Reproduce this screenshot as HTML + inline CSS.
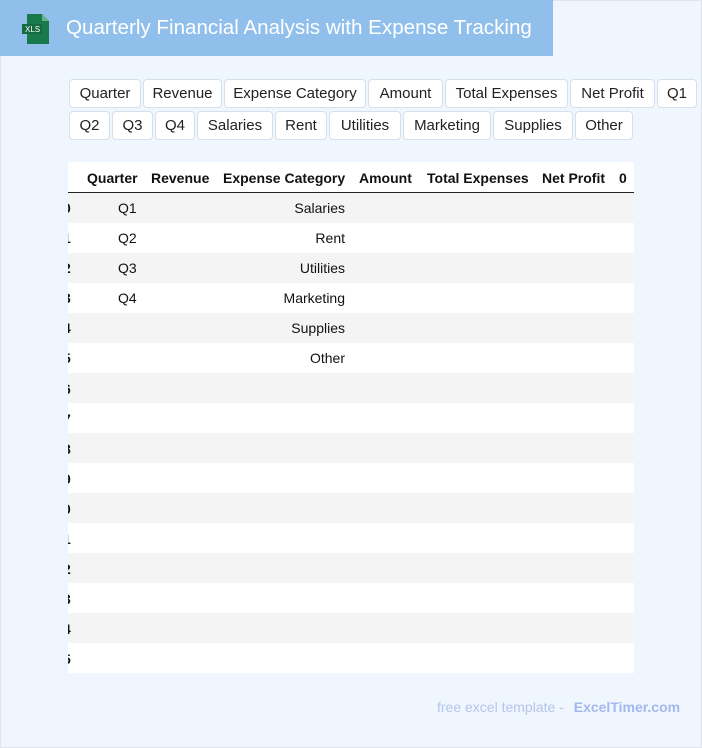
<!DOCTYPE html>
<html><head><meta charset="utf-8"><style>
*{margin:0;padding:0;box-sizing:border-box}
body{width:702px;height:748px;background:#f0f6fe;font-family:"Liberation Sans",sans-serif;position:relative;overflow:hidden;box-shadow:inset 0 0 0 1px #dde4ee}
.hdr{position:absolute;left:0;top:0;width:553px;height:56px;background:#90bfec}
.hdr .t{position:absolute;left:66px;top:16px;color:#fff;font-size:20.6px}
.btn{position:absolute;height:29px;border:1px solid #d6e0ec;border-radius:4px;background:#fff;font-size:15px;color:#222;line-height:27px;text-align:center}
.tbl{position:absolute;left:68px;top:162px;width:566px;height:511px;overflow:hidden;background:#fff}
.row{position:absolute;left:0;width:566px;height:30px}
.row.g{background:#f4f4f4}
.c{position:absolute;font-size:14px;color:#111;top:7px}
.h{font-weight:bold;top:8px}
.foot{position:absolute;top:699px;left:437px;font-size:14px;color:#b5c5ec}
.foot b{color:#a3b8ee;margin-left:6px}
</style></head><body>
<div class="hdr">
<svg style="position:absolute;left:21px;top:14px" width="30" height="30" viewBox="0 0 30 30"><path d="M6 0h15l7 7v23H6z" fill="#18794a"/><path d="M21 0v7h7z" fill="#5fb585"/><rect x="1" y="10" width="20" height="10" fill="#136b3f"/><text x="4" y="18" font-size="8" fill="#fff" font-family="Liberation Sans">XLS</text></svg>
<div class="t">Quarterly Financial Analysis with Expense Tracking</div></div>

<div class="btn" style="left:69px;top:79px;width:72px">Quarter</div>
<div class="btn" style="left:143px;top:79px;width:79px">Revenue</div>
<div class="btn" style="left:224px;top:79px;width:142px">Expense Category</div>
<div class="btn" style="left:368px;top:79px;width:75px">Amount</div>
<div class="btn" style="left:445px;top:79px;width:123px">Total Expenses</div>
<div class="btn" style="left:570px;top:79px;width:85px">Net Profit</div>
<div class="btn" style="left:657px;top:79px;width:40px">Q1</div>
<div class="btn" style="left:69px;top:111px;width:41px">Q2</div>
<div class="btn" style="left:112px;top:111px;width:41px">Q3</div>
<div class="btn" style="left:155px;top:111px;width:40px">Q4</div>
<div class="btn" style="left:197px;top:111px;width:76px">Salaries</div>
<div class="btn" style="left:275px;top:111px;width:52px">Rent</div>
<div class="btn" style="left:329px;top:111px;width:72px">Utilities</div>
<div class="btn" style="left:403px;top:111px;width:88px">Marketing</div>
<div class="btn" style="left:493px;top:111px;width:80px">Supplies</div>
<div class="btn" style="left:575px;top:111px;width:58px">Other</div>

<div class="tbl">
<div class="row" style="top:0;height:31px;border-bottom:1px solid #222">
<span class="c h" style="left:19px">Quarter</span><span class="c h" style="left:83px">Revenue</span><span class="c h" style="left:155px">Expense Category</span><span class="c h" style="left:291px">Amount</span><span class="c h" style="left:359px">Total Expenses</span><span class="c h" style="left:474px">Net Profit</span><span class="c h" style="left:551px">0</span></div>
<div class="row g" style="top:31px"><span class="c h" style="left:-5px;top:7px">0</span><span class="c" style="left:50px">Q1</span><span class="c" style="right:289px">Salaries</span></div>
<div class="row" style="top:61px"><span class="c h" style="left:-5px;top:7px">1</span><span class="c" style="left:50px">Q2</span><span class="c" style="right:289px">Rent</span></div>
<div class="row g" style="top:91px"><span class="c h" style="left:-5px;top:7px">2</span><span class="c" style="left:50px">Q3</span><span class="c" style="right:289px">Utilities</span></div>
<div class="row" style="top:121px"><span class="c h" style="left:-5px;top:7px">3</span><span class="c" style="left:50px">Q4</span><span class="c" style="right:289px">Marketing</span></div>
<div class="row g" style="top:151px"><span class="c h" style="left:-5px;top:7px">4</span><span class="c" style="right:289px">Supplies</span></div>
<div class="row" style="top:181px"><span class="c h" style="left:-5px;top:7px">5</span><span class="c" style="right:289px">Other</span></div>
<div class="row g" style="top:211px"><span class="c h" style="left:-5px">6</span></div>
<div class="row" style="top:241px"><span class="c h" style="left:-5px">7</span></div>
<div class="row g" style="top:271px"><span class="c h" style="left:-5px">8</span></div>
<div class="row" style="top:301px"><span class="c h" style="left:-5px">9</span></div>
<div class="row g" style="top:331px"><span class="c h" style="left:-5px">0</span></div>
<div class="row" style="top:361px"><span class="c h" style="left:-5px">1</span></div>
<div class="row g" style="top:391px"><span class="c h" style="left:-5px">2</span></div>
<div class="row" style="top:421px"><span class="c h" style="left:-5px">3</span></div>
<div class="row g" style="top:451px"><span class="c h" style="left:-5px">4</span></div>
<div class="row" style="top:481px"><span class="c h" style="left:-5px">5</span></div>
</div>
<div class="foot">free excel template - <b>ExcelTimer.com</b></div>
</body></html>
